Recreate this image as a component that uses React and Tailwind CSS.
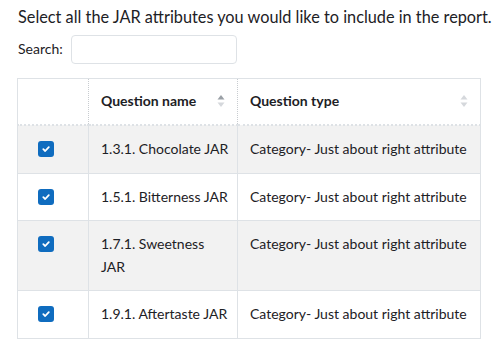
import React from 'react';

const rows = [
  { name: '1.3.1. Chocolate JAR', striped: true },
  { name: '1.5.1. Bitterness JAR', striped: false },
  { name: ['1.7.1. Sweetness', 'JAR'], striped: true },
  { name: '1.9.1. Aftertaste JAR', striped: false },
];

function SortIcon({ active }) {
  return (
    <svg width="8" height="14" viewBox="0 0 8 14" className="shrink-0">
      <path d="M4 1 L7.5 5.5 L0.5 5.5 Z" fill={active ? '#9aa0a6' : '#d5d8dc'} />
      <path d="M4 13 L7.5 8.5 L0.5 8.5 Z" fill="#d5d8dc" />
    </svg>
  );
}

function Checkbox() {
  return (
    <span className="w-4 h-4 rounded-[3px] bg-[#0f6cbf] flex items-center justify-center">
      <svg width="10" height="10" viewBox="0 0 10 10">
        <path d="M2.3 5.2 L4.2 7 L7.8 3.1" stroke="white" strokeWidth="1.8" fill="none" strokeLinecap="round" strokeLinejoin="round" />
      </svg>
    </span>
  );
}

function App() {
  return (
    <div className="bg-white w-[498px] h-[346px] overflow-hidden text-[#1d2125] text-[14px] leading-[22.5px] font-['Lato','Open_Sans',sans-serif] pl-[17px] pt-[6px]">
      <p className="pl-px text-[16.3px]">Select all the JAR attributes you would like to include in the report.</p>
      <div className="flex items-center mt-[6px] pl-px">
        <span>Search:</span>
        <input type="text" className="ml-[8px] w-[166px] h-[29px] border border-[#dee2e6] rounded-[4px] outline-none px-2" />
      </div>
      <table className="mt-[14px] w-[464px] table-fixed border-collapse border border-[#dee2e6]">
        <thead>
          <tr className="h-[47px]">
            <th className="w-[71px] border-r border-dotted border-r-[#c8ccd0] border-b-2 border-b-[#dee2e6]"></th>
            <th className="w-[149px] px-3 text-left font-bold border-r border-dotted border-r-[#c8ccd0] border-b-2 border-b-[#dee2e6]">
              <div className="flex items-center justify-between">
                <span>Question name</span>
                <SortIcon active />
              </div>
            </th>
            <th className="px-3 text-left font-bold border-r border-dotted border-r-[#c8ccd0] border-b-2 border-b-[#dee2e6]">
              <div className="flex items-center justify-between">
                <span>Question type</span>
                <SortIcon />
              </div>
            </th>
          </tr>
        </thead>
        <tbody>
          {rows.map((r, i) => (
            <tr key={i} className={r.striped ? 'bg-[#f2f2f2]' : 'bg-white'}>
              <td className="align-top pt-[12px] pb-[12px] pl-[20px] border-b border-[#dee2e6]">
                <div className="h-[22.5px] flex items-center">
                  <Checkbox />
                </div>
              </td>
              <td className="align-top py-[12px] px-3 border-l border-b border-[#dee2e6] whitespace-nowrap">
                {Array.isArray(r.name) ? (
                  <>
                    {r.name[0]}
                    <br />
                    {r.name[1]}
                  </>
                ) : (
                  r.name
                )}
              </td>
              <td className="align-top py-[12px] px-3 border-l border-b border-[#dee2e6] whitespace-nowrap">
                Category- Just about right attribute
              </td>
            </tr>
          ))}
        </tbody>
      </table>
    </div>
  );
}

export default App;
